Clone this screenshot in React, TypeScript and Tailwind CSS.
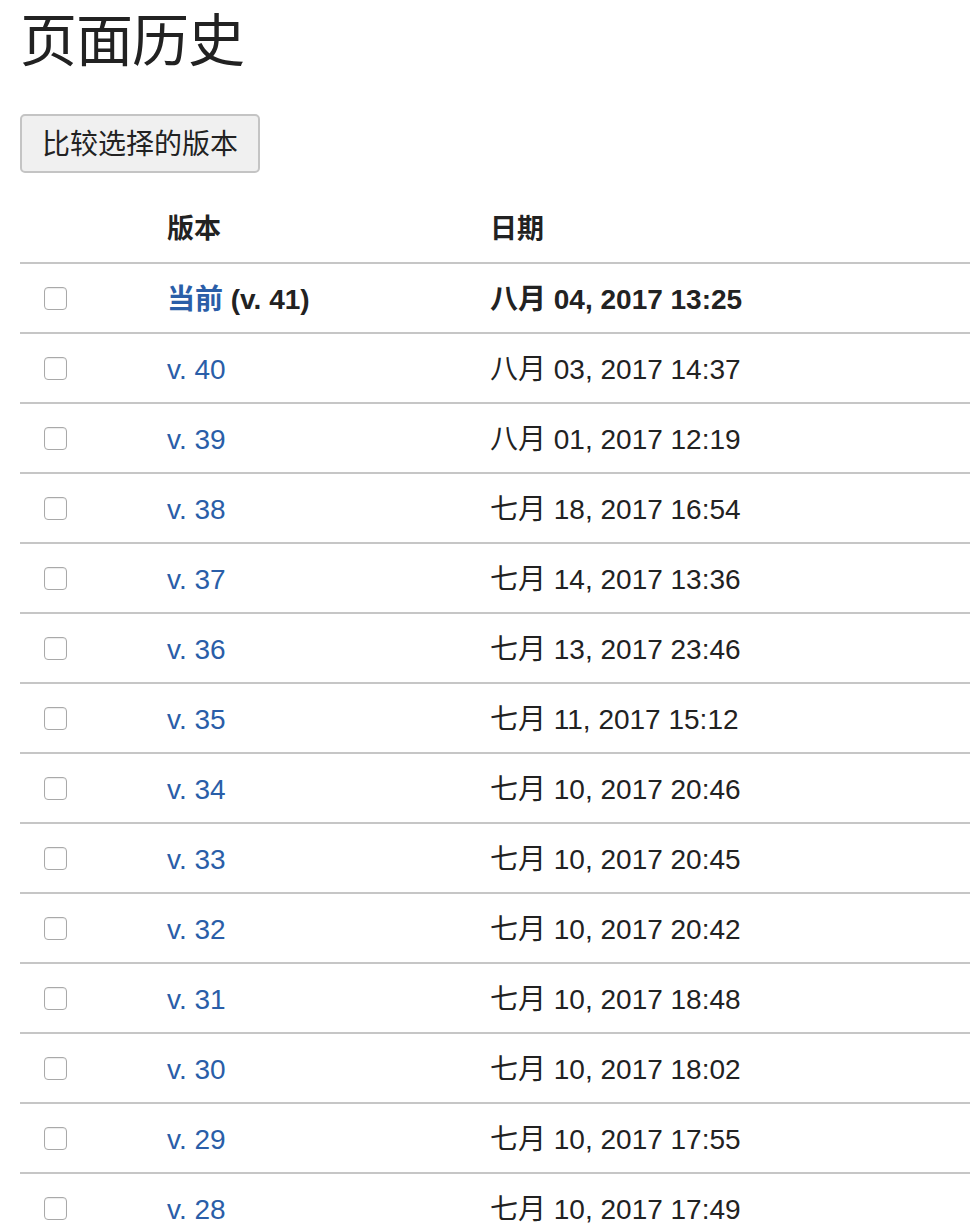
import React from "react";

const rows = [
  { v: "v. 40", date: "八月 03, 2017 14:37" },
  { v: "v. 39", date: "八月 01, 2017 12:19" },
  { v: "v. 38", date: "七月 18, 2017 16:54" },
  { v: "v. 37", date: "七月 14, 2017 13:36" },
  { v: "v. 36", date: "七月 13, 2017 23:46" },
  { v: "v. 35", date: "七月 11, 2017 15:12" },
  { v: "v. 34", date: "七月 10, 2017 20:46" },
  { v: "v. 33", date: "七月 10, 2017 20:45" },
  { v: "v. 32", date: "七月 10, 2017 20:42" },
  { v: "v. 31", date: "七月 10, 2017 18:48" },
  { v: "v. 30", date: "七月 10, 2017 18:02" },
  { v: "v. 29", date: "七月 10, 2017 17:55" },
  { v: "v. 28", date: "七月 10, 2017 17:49" },
];

function Checkbox() {
  return (
    <span className="block h-[23px] w-[23px] rounded-[4px] border border-[#a9a9a9] bg-white shadow-[inset_0_1px_1px_rgba(0,0,0,0.08)]" />
  );
}

export default function App() {
  return (
    <div
      className="min-h-screen bg-white pl-5 text-[#222]"
      style={{ fontFamily: '"Liberation Sans", "Noto Sans CJK SC", sans-serif' }}
    >
      <h1
        className="pt-[12px] text-[57px] font-normal leading-[60px] tracking-[-1px] text-[#222]"
        style={{ fontFamily: '"Liberation Serif", "Noto Sans CJK SC", serif' }}
      >
        页面历史
      </h1>

      <button className="mt-[42px] h-[59px] w-[240px] rounded-[5px] border-2 border-[#c4c4c4] bg-[#f0f0f0] pt-[2px] text-[28px] text-[#222]">
        比较选择的版本
      </button>

      <table className="mt-5 w-[950px] border-collapse text-[28px]">
        <thead>
          <tr className="h-[70px] border-b-2 border-[#c6c6c6]">
            <th className="w-[123px] px-6"></th>
            <th className="w-[323px] px-6 pt-[4px] text-left text-[27px] font-bold">版本</th>
            <th className="px-6 pt-[4px] text-left text-[27px] font-bold">日期</th>
          </tr>
        </thead>
        <tbody>
          <tr className="h-[70px] border-b-2 border-[#c6c6c6]">
            <td className="px-6">
              <Checkbox />
            </td>
            <td className="px-6 pt-[3px] font-bold">
              <span className="text-[#2a5ea8]">当前</span> (v. 41)
            </td>
            <td className="px-6 pt-[3px] font-bold">八月 04, 2017 13:25</td>
          </tr>
          {rows.map((r) => (
            <tr key={r.v} className="h-[70px] border-b-2 border-[#c6c6c6]">
              <td className="px-6">
                <Checkbox />
              </td>
              <td className="px-6 pt-[3px] text-[#2a5ea8]">{r.v}</td>
              <td className="px-6 pt-[3px]">{r.date}</td>
            </tr>
          ))}
        </tbody>
      </table>
    </div>
  );
}
